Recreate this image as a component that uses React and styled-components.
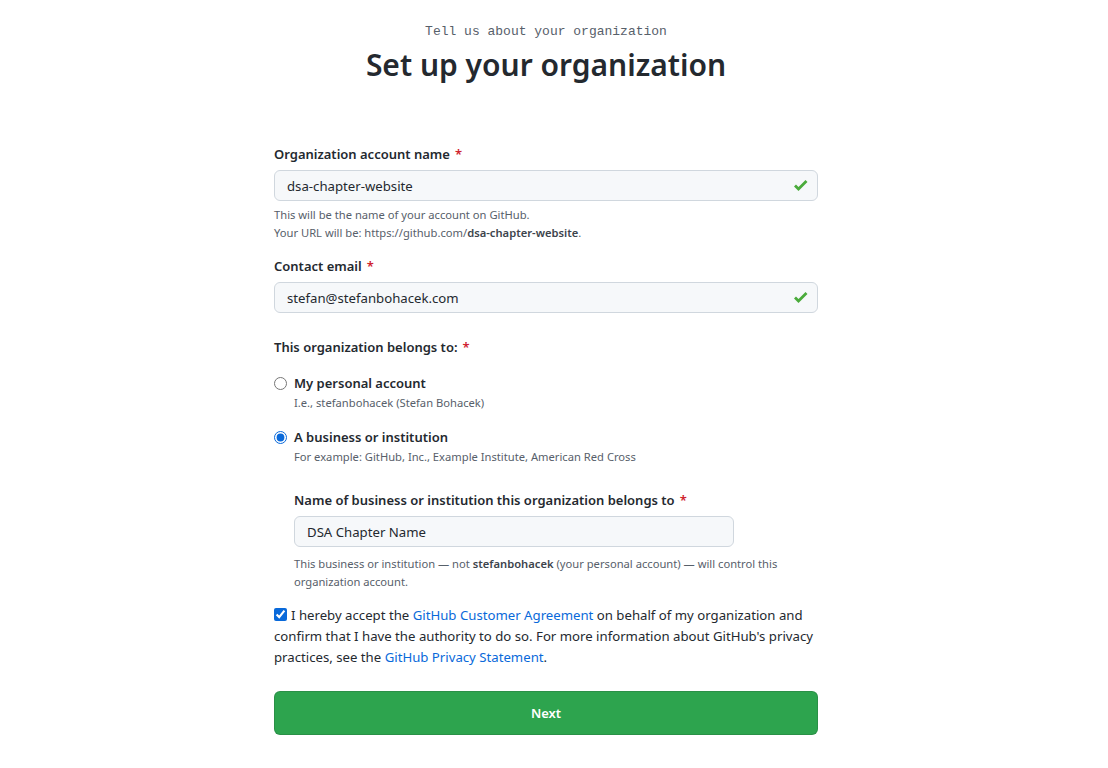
import React, { useState } from 'react';
import styled, { createGlobalStyle } from 'styled-components';

const GlobalStyle = createGlobalStyle`
  body {
    margin: 0;
    background: #ffffff;
    color: #24292f;
    font-family: "Noto Sans", "Liberation Sans", sans-serif;
  }
`;

const Page = styled.main`
  padding: 22px 16px 32px 0;
  display: flex;
  flex-direction: column;
  align-items: center;
`;

const Header = styled.header`
  text-align: center;
  margin-bottom: 59px;
`;

const Eyebrow = styled.p`
  margin: 0 0 3px;
  font-family: "Liberation Mono", "DejaVu Sans Mono", monospace;
  font-size: 13px;
  line-height: 20px;
  color: #57606a;
`;

const Title = styled.h1`
  margin: 0;
  font-size: 30px;
  line-height: 40px;
  font-weight: 600;
  color: #24292f;
`;

const Form = styled.form`
  width: 544px;
  display: flex;
  flex-direction: column;
`;

const Field = styled.div`
  display: flex;
  flex-direction: column;
  margin-bottom: ${({ $gap }) => $gap || 0}px;
`;

const Label = styled.label`
  font-size: 13px;
  line-height: 21px;
  font-weight: 600;
  color: #24292f;
  margin-bottom: 5px;
`;

const Required = styled.span`
  color: #cf222e;
  margin-left: 5px;
`;

const InputWrap = styled.div`
  position: relative;
  width: ${({ $width }) => $width || '100%'};
`;

const TextInput = styled.input`
  box-sizing: border-box;
  width: 100%;
  height: 31px;
  padding: 0 36px 0 12px;
  font-family: inherit;
  font-size: 13.2px;
  color: #24292f;
  background: #f6f8fa;
  border: 1px solid #d0d7de;
  border-radius: 6px;
  outline: none;
`;

const ValidIcon = styled.svg`
  position: absolute;
  right: 9px;
  top: 8px;
  width: 16px;
  height: 16px;
  fill: none;
  stroke: #4aab3b;
  stroke-width: 2.8;
`;

const Note = styled.p`
  margin: ${({ $top }) => $top || 0}px 0 0;
  font-size: 11.2px;
  line-height: 18px;
  color: #57606a;

  strong {
    font-weight: 600;
    color: #3d444c;
  }
`;

const GroupLabel = styled.div`
  font-size: 13px;
  line-height: 21px;
  font-weight: 600;
  margin-bottom: 15px;
`;

const Option = styled.label`
  display: grid;
  grid-template-columns: 13px 1fr;
  column-gap: 7px;
  align-items: start;
  margin-bottom: ${({ $gap }) => $gap || 0}px;
  cursor: pointer;
`;

const Radio = styled.input`
  margin: 4px 0 0;
  width: 13px;
  height: 13px;
  accent-color: #0969da;
`;

const OptionTitle = styled.div`
  font-size: 13px;
  line-height: 21px;
  font-weight: 600;
  color: #24292f;
`;

const Nested = styled.div`
  padding-left: 20px;
  margin-bottom: 14px;
`;

const Agreement = styled.label`
  font-size: 13.2px;
  line-height: 21px;
  color: #24292f;
  margin-bottom: 23px;
`;

const Checkbox = styled.input`
  margin: 0 4px 0 0;
  width: 13px;
  height: 13px;
  vertical-align: -1px;
  accent-color: #0969da;
`;

const Link = styled.a`
  color: #0969da;
  text-decoration: none;
`;

const SubmitButton = styled.button`
  height: 44px;
  width: 100%;
  border: 1px solid rgba(27, 31, 36, 0.15);
  border-radius: 6px;
  background: #2da44e;
  color: #ffffff;
  font-family: inherit;
  font-size: 13px;
  font-weight: 600;
  cursor: pointer;
`;

const Check = () => (
  <ValidIcon viewBox="0 0 16 16" aria-hidden="true">
    <polyline points="2,7.5 5.5,11 13.5,3" />
  </ValidIcon>
);

export default function App() {
  const [owner, setOwner] = useState('business');
  const [accepted, setAccepted] = useState(true);

  return (
    <>
      <GlobalStyle />
      <Page>
        <Header>
          <Eyebrow>Tell us about your organization</Eyebrow>
          <Title>Set up your organization</Title>
        </Header>

        <Form onSubmit={(e) => e.preventDefault()}>
          <Field $gap={14}>
            <Label>
              Organization account name<Required>*</Required>
            </Label>
            <InputWrap>
              <TextInput defaultValue="dsa-chapter-website" />
              <Check />
            </InputWrap>
            <Note $top={5}>
              This will be the name of your account on GitHub.
              <br />
              Your URL will be: https://github.com/<strong>dsa-chapter-website</strong>.
            </Note>
          </Field>

          <Field $gap={24}>
            <Label>
              Contact email<Required>*</Required>
            </Label>
            <InputWrap>
              <TextInput defaultValue="stefan@stefanbohacek.com" />
              <Check />
            </InputWrap>
          </Field>

          <GroupLabel>
            This organization belongs to:<Required>*</Required>
          </GroupLabel>

          <Option $gap={15}>
            <Radio
              type="radio"
              name="owner"
              checked={owner === 'personal'}
              onChange={() => setOwner('personal')}
            />
            <div>
              <OptionTitle>My personal account</OptionTitle>
              <Note>I.e., stefanbohacek (Stefan Bohacek)</Note>
            </div>
          </Option>

          <Option $gap={24}>
            <Radio
              type="radio"
              name="owner"
              checked={owner === 'business'}
              onChange={() => setOwner('business')}
            />
            <div>
              <OptionTitle>A business or institution</OptionTitle>
              <Note>For example: GitHub, Inc., Example Institute, American Red Cross</Note>
            </div>
          </Option>

          <Nested>
            <Field>
              <Label>
                Name of business or institution this organization belongs to<Required>*</Required>
              </Label>
              <InputWrap $width="440px">
                <TextInput defaultValue="DSA Chapter Name" />
              </InputWrap>
              <Note $top={8}>
                This business or institution — not <strong>stefanbohacek</strong> (your personal
                account) — will control this organization account.
              </Note>
            </Field>
          </Nested>

          <Agreement>
            <Checkbox
              type="checkbox"
              checked={accepted}
              onChange={(e) => setAccepted(e.target.checked)}
            />
            I hereby accept the <Link href="#">GitHub Customer Agreement</Link> on behalf of my
            organization and confirm that I have the authority to do so. For more information about
            GitHub's privacy practices, see the <Link href="#">GitHub Privacy Statement</Link>.
          </Agreement>

          <SubmitButton type="submit">Next</SubmitButton>
        </Form>
      </Page>
    </>
  );
}
